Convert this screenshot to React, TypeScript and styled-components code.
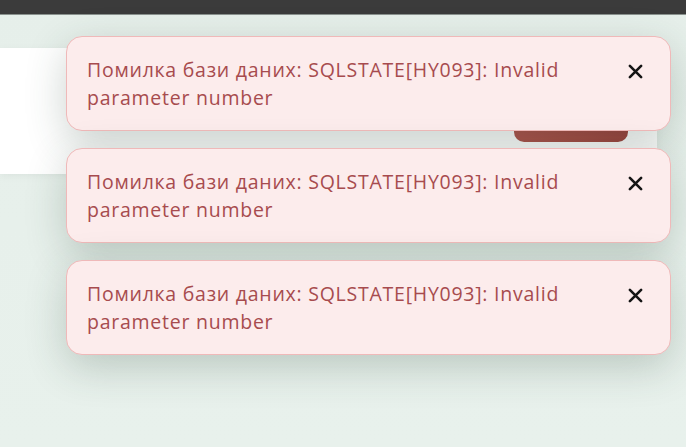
import styled, { createGlobalStyle } from "styled-components";

const message = "Помилка бази даних: SQLSTATE[HY093]: Invalid parameter number";

const GlobalStyle = createGlobalStyle`
  html, body {
    margin: 0;
    padding: 0;
    height: 100%;
  }
  body {
    font-family: "Open Sans", "Noto Sans", sans-serif;
    background: #e9f1ec;
    overflow: hidden;
  }
`;

const Page = styled.div`
  position: relative;
  width: 686px;
  height: 447px;
  display: flex;
  flex-direction: column;
  background: linear-gradient(180deg, #e6efea 0%, #e8f1ec 100%);
`;

const TopBar = styled.div`
  height: 14px;
  background: #3b3b3b;
  border-bottom: 1px solid #8a928e;
`;

const Content = styled.div`
  padding-top: 33px;
  padding-right: 29px;
`;

const Card = styled.div`
  height: 126px;
  background: #ffffff;
  border-radius: 0 6px 6px 0;
  box-shadow: 0 2px 8px rgba(0, 0, 0, 0.05);
  display: flex;
  justify-content: flex-end;
  align-items: flex-end;
  padding: 0 29px 32px 0;
  box-sizing: border-box;
`;

const SubmitButton = styled.button`
  width: 114px;
  height: 40px;
  border: none;
  border-radius: 10px;
  background: linear-gradient(90deg, #b0524b, #9e423d);
`;

const ToastStack = styled.div`
  position: absolute;
  top: 36px;
  right: 15px;
  width: 605px;
  display: flex;
  flex-direction: column;
  gap: 17px;
`;

const Toast = styled.div`
  display: flex;
  align-items: flex-start;
  justify-content: space-between;
  height: 95px;
  box-sizing: border-box;
  padding: 19px 26px 0 20px;
  background: #fcecec;
  border: 1.5px solid #efb9b9;
  border-radius: 16px;
  box-shadow: 0 12px 40px rgba(40, 70, 55, 0.24);
`;

const ToastText = styled.p`
  margin: 0;
  width: 500px;
  color: #a74b4e;
  font-size: 19.5px;
  letter-spacing: 0.75px;
  line-height: 28px;
`;

const CloseButton = styled.button`
  border: none;
  background: none;
  padding: 0;
  margin-top: 6px;
  width: 18px;
  height: 18px;
  display: flex;
  align-items: center;
  justify-content: center;
  cursor: pointer;
`;

function CloseIcon() {
  return (
    <svg width="15" height="15" viewBox="0 0 16 16">
      <path d="M2 2 L14 14 M14 2 L2 14" stroke="#151515" strokeWidth="2.8" strokeLinecap="round" />
    </svg>
  );
}

export default function App() {
  const toasts = [1, 2, 3];
  return (
    <>
      <GlobalStyle />
      <Page>
        <TopBar />
        <Content>
          <Card>
            <SubmitButton />
          </Card>
        </Content>
        <ToastStack>
          {toasts.map((id) => (
            <Toast key={id}>
              <ToastText>{message}</ToastText>
              <CloseButton aria-label="Закрити">
                <CloseIcon />
              </CloseButton>
            </Toast>
          ))}
        </ToastStack>
      </Page>
    </>
  );
}
